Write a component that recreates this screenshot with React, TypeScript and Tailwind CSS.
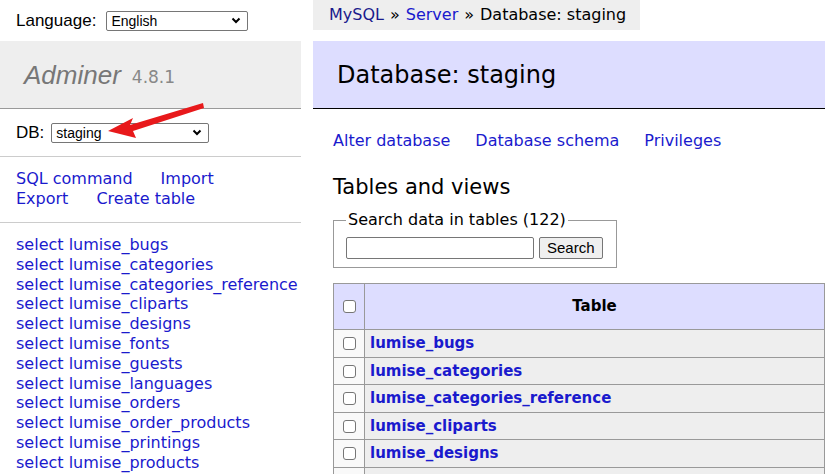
import React from 'react'

const verdana = { fontFamily: '"DejaVu Sans", Verdana, sans-serif' }
const arial = { fontFamily: '"Liberation Sans", Arial, sans-serif' }

const sideTables = [
  'lumise_bugs',
  'lumise_categories',
  'lumise_categories_reference',
  'lumise_cliparts',
  'lumise_designs',
  'lumise_fonts',
  'lumise_guests',
  'lumise_languages',
  'lumise_orders',
  'lumise_order_products',
  'lumise_printings',
  'lumise_products',
]

const mainTables = ['lumise_bugs', 'lumise_categories', 'lumise_categories_reference', 'lumise_cliparts', 'lumise_designs']

function Box() {
  return <span className="inline-block w-[13px] h-[13px] rounded-[3px] border border-[#767676] bg-white align-middle" />
}

function Select({ value, width }: { value: string; width: string }) {
  return (
    <span
      className={`inline-flex items-center justify-between h-[20px] border border-[#767676] rounded-[2px] bg-white pl-[4px] pr-[6px] text-[14px] text-black ${width}`}
      style={arial}
    >
      <span className="leading-none">{value}</span>
      <svg width="10" height="7" viewBox="0 0 10 7">
        <path d="M1.5 1.5 L5 5 L8.5 1.5" fill="none" stroke="#000" strokeWidth="2" />
      </svg>
    </span>
  )
}

export default function App() {
  return (
    <div className="w-[825px] h-[474px] overflow-hidden bg-white flex text-black" style={verdana}>
      {/* sidebar */}
      <div className="relative w-[301px] shrink-0 flex flex-col">
        <div className="h-[41px] shrink-0 flex items-center pl-[16px] text-[17px]" style={arial}>
          <span className="mr-[10px]">Language:</span>
          <Select value="English" width="w-[142px]" />
        </div>
        <div className="h-[68px] shrink-0 bg-[#eee] border-b border-[#999] flex items-center pl-[24px] pt-[2px]">
          <span className="italic text-[#777] text-[26px]" style={arial}>Adminer</span>
          <span className="text-[#888] text-[17px] ml-[11px] mt-[5px]">4.8.1</span>
        </div>
        <div className="h-[48px] shrink-0 border-b border-[#ccc] flex items-center pl-[16px] text-[17px]" style={arial}>
          <span className="mr-[7px]">DB:</span>
          <Select value="staging" width="w-[158px]" />
        </div>
        <div className="h-[66px] shrink-0 border-b border-[#ccc] pl-[16px] pt-[12px] text-[16px] leading-[20px] text-[#1a1acd]">
          <div>
            <span>SQL command</span>
            <span className="ml-[28px]">Import</span>
          </div>
          <div>
            <span>Export</span>
            <span className="ml-[28px]">Create table</span>
          </div>
        </div>
        <div className="shrink-0 pl-[16px] pt-[12px] text-[16px] leading-[19.8px] text-[#1a1acd] whitespace-nowrap">
          {sideTables.map((t) => (
            <div key={t}>select {t}</div>
          ))}
        </div>
        <svg className="absolute left-[100px] top-[98px]" width="110" height="45" viewBox="0 0 110 45">
          <path d="M103 5 L30 27 L33 20 L8 33 L36 40 L33 33 L104 10 Z" fill="#e8191b" />
        </svg>
      </div>
      <div className="w-[12px] shrink-0" />
      {/* main */}
      <div className="flex-1 min-w-0 flex flex-col">
        <div className="h-[30px] shrink-0 w-[327px] bg-[#eee] flex items-center pl-[16px] text-[16px] whitespace-nowrap">
          <span className="text-[#1a1a8c]">MySQL</span>
          <span className="mx-[6px]">»</span>
          <span className="text-[#1a1acd]">Server</span>
          <span className="mx-[6px]">»</span>
          <span>Database: staging</span>
        </div>
        <div className="h-[11px] shrink-0" />
        <div className="h-[68px] shrink-0 bg-[#ddf] border-b border-black flex items-center pl-[24px] text-[24px]">
          Database: staging
        </div>
        <div className="shrink-0 pl-[20px]">
          <div className="mt-[22px] flex gap-[25px] text-[16px] leading-[20px] text-[#1a1acd]">
            <span>Alter database</span>
            <span>Database schema</span>
            <span>Privileges</span>
          </div>
          <div className="mt-[21px] text-[21px] leading-[30px]">Tables and views</div>
          <fieldset className="mt-[8px] w-[284px] border border-[#999] px-[12px] pb-[8px] pt-0">
            <legend className="px-[2px] text-[16px] leading-[20px]">Search data in tables (122)</legend>
            <div className="flex items-center gap-[5px] mt-[7px]">
              <span className="w-[188px] h-[22px] border border-[#767676] rounded-[2px] bg-white" />
              <span
                className="h-[22px] px-[7px] flex items-center border border-[#767676] rounded-[2px] bg-[#efefef] text-[15px]"
                style={arial}
              >
                Search
              </span>
            </div>
          </fieldset>
          <table className="mt-[15px] border-collapse text-[15px]" style={{ width: 700 }}>
            <thead>
              <tr className="bg-[#ddf] h-[46px]">
                <td className="w-[31px] border border-[#999] text-center">
                  <Box />
                </td>
                <th className="w-[460px] border border-[#999] font-bold text-center">Table</th>
                <th className="border border-[#999]" />
              </tr>
            </thead>
            <tbody>
              {mainTables.map((t) => (
                <tr key={t} className="h-[27.5px]">
                  <td className="border border-[#999] text-center bg-[#f9f9f9]">
                    <Box />
                  </td>
                  <td className="border border-[#999] bg-[#eee] pl-[5px] font-bold text-[#1a1acd]">{t}</td>
                  <td className="border border-[#999] bg-[#eee]" />
                </tr>
              ))}
              <tr className="h-[27.5px]">
                <td className="border border-[#999] bg-[#f9f9f9]" />
                <td className="border border-[#999] bg-[#eee]" />
                <td className="border border-[#999] bg-[#eee]" />
              </tr>
            </tbody>
          </table>
        </div>
      </div>
    </div>
  )
}
